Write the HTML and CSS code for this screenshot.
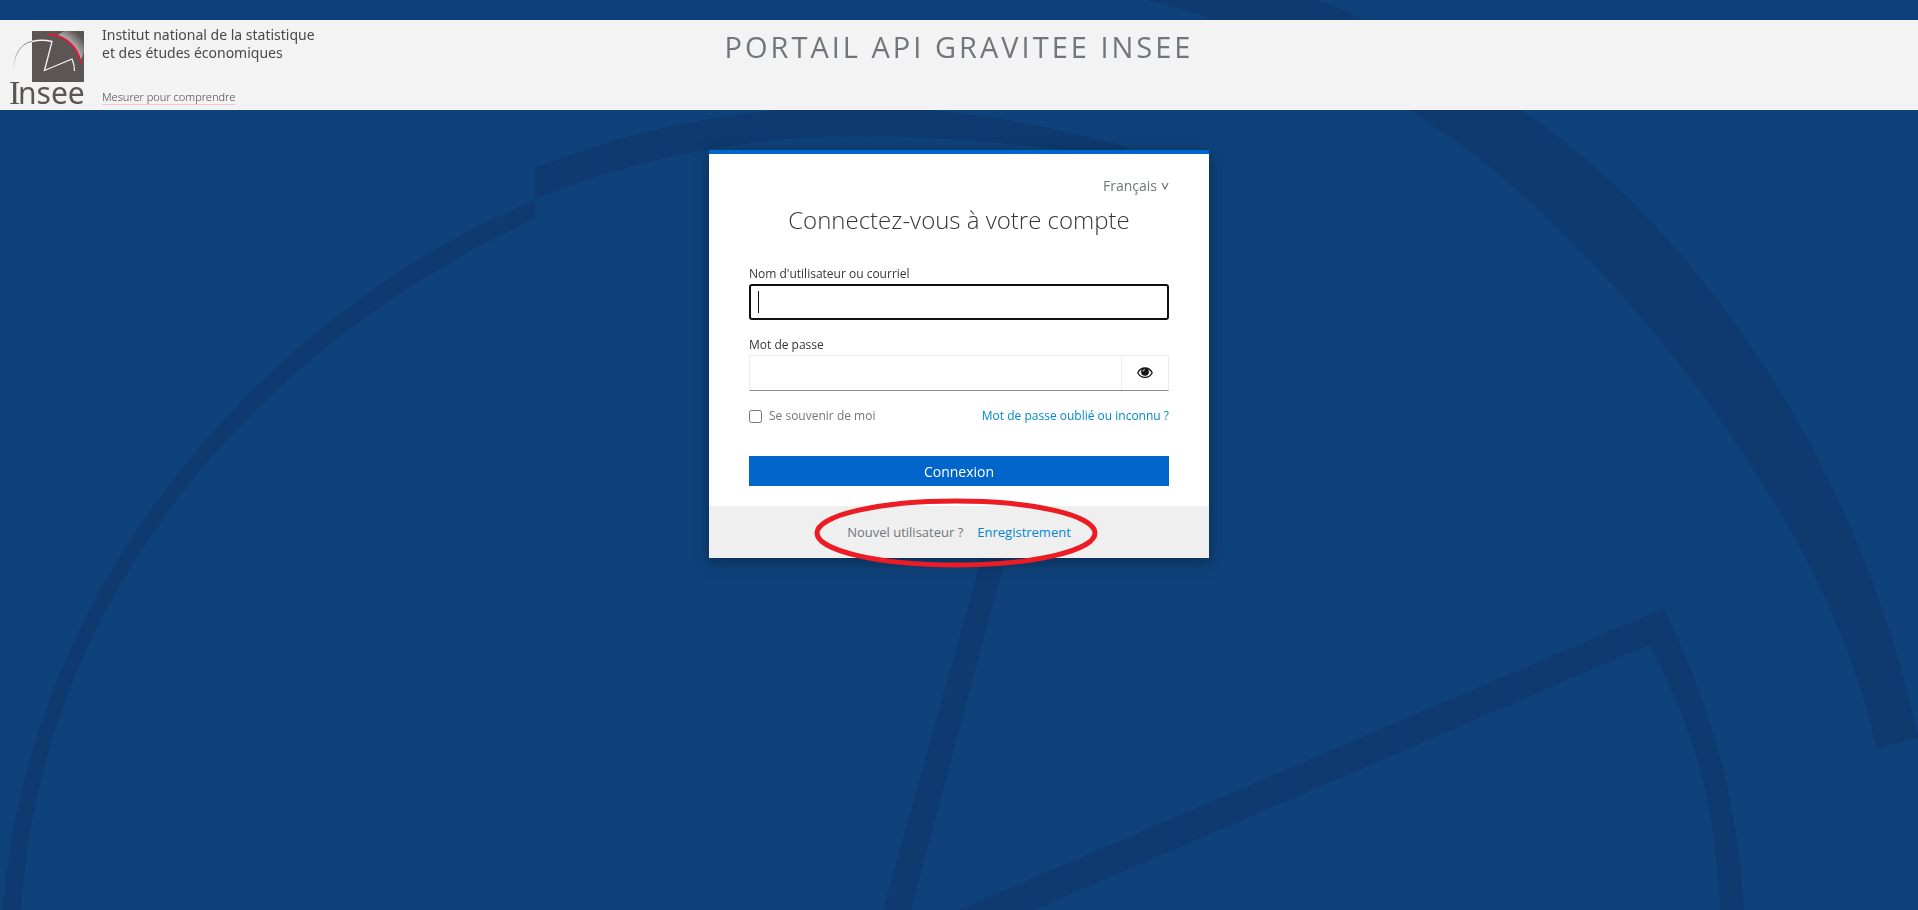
FILE: index.html
```html
<!DOCTYPE html>
<html lang="fr">
<head>
<meta charset="utf-8">
<title>Portail API Gravitee Insee</title>
<link rel="stylesheet" href="styles.css">
</head>
<body>
<svg class="backdrop" viewBox="0 0 1918 910" preserveAspectRatio="xMidYMin slice" aria-hidden="true">
  <path d="M3 910C28 572 280 305 535 200V168C640 125 750 107 850 107C950 107 1040 122 1130 148L1003 567L911 910H883L979 567L1080 152C1010 143 940 136 857 136C750 136 640 157 535 199V219C280 335 43 575 21 910Z"/>
  <path d="M1148 0C1240 25 1325 60 1408 110C1578 207 1830 510 1876 749L1918 738V736C1850 425 1665 205 1521 110C1458 66 1390 28 1319 0Z"/>
  <path d="M958 910L1664 608C1712 710 1738 800 1744 910H1720C1716 810 1696 730 1649 645L1034 910Z"/>
</svg>
<header class="site-header">
  <a class="brand" href="#">
    <svg class="brand-logo" viewBox="0 0 78 80" role="img" aria-label="Insee">
      <defs>
        <radialGradient id="glow" gradientUnits="userSpaceOnUse" cx="36.500" cy="40.500" r="52">
          <stop offset="0.72" stop-color="#b5b1b0"/>
          <stop offset="0.95" stop-color="#5b5553"/>
        </radialGradient>
        <linearGradient id="fade" x1="0" y1="1" x2="1" y2="0">
          <stop offset="0" stop-color="#f2f2f2"/>
          <stop offset="0.5" stop-color="#999"/>
          <stop offset="1" stop-color="#777"/>
        </linearGradient>
      </defs>
      <rect x="24" y="1" width="52" height="51" fill="#5b5553"/>
      <path d="M50 5Q67 11 73 30L76 22V1H56Z" fill="url(#glow)"/>
      <path d="M5 41C6 23 14 13 24 11.500" fill="none" stroke="url(#fade)"/>
      <path d="M24 11.500Q34 9 44 11.500L36.500 40.500L64 29Q66.500 34 66.500 41" fill="none" stroke="#f5f5f5" stroke-width="1.300"/>
      <path d="M40 4.500C56 5 69 15 73 33" fill="none" stroke="#e2183c" stroke-width="2"/>
      <text class="logo-text" x="1" y="74"><tspan class="logo-initial">I</tspan><tspan x="10">nsee</tspan></text>
    </svg>
    <span class="brand-copy">
      <span class="brand-name">Institut national de la statistique<br>et des études économiques</span>
      <span class="brand-motto">Mesurer pour comprendre</span>
    </span>
  </a>
  <div class="site-title">Portail API Gravitee Insee</div>
</header>
<main class="card">
  <div class="card-body">
    <button class="locale" type="button">Français <svg viewBox="0 0 8 8" aria-hidden="true"><path d="M1 1L4 7L7 1"/></svg></button>
    <h1 class="card-title">Connectez-vous à votre compte</h1>
    <form class="login">
      <div class="field">
        <label for="username">Nom d'utilisateur ou courriel</label>
        <div class="control control-focused"><input id="username" type="text"><span class="caret"></span></div>
      </div>
      <div class="field">
        <label for="password">Mot de passe</label>
        <div class="control control-password">
          <input id="password" type="password">
          <button class="reveal" type="button" aria-label="Afficher le mot de passe">
            <svg viewBox="0 0 16 12" aria-hidden="true">
              <path d="M8 1C4.800 1 2.200 3 .8 5.700C2.200 8.500 4.800 10.400 8 10.400S13.800 8.500 15.200 5.700C13.800 3 11.200 1 8 1Z" fill="none" stroke="#151515" stroke-width="1.300"/>
              <circle cx="8" cy="4.800" r="3.900" fill="#151515"/>
              <path d="M6 4.600Q6 2.600 8 2.600" fill="none" stroke="#fff" stroke-width=".8"/>
            </svg>
          </button>
        </div>
      </div>
      <div class="options">
        <label class="remember"><input type="checkbox"> Se souvenir de moi</label>
        <a href="#">Mot de passe oublié ou inconnu ?</a>
      </div>
      <button class="submit" type="submit">Connexion</button>
    </form>
  </div>
  <div class="card-footer">
    <span>Nouvel utilisateur ?</span>
    <a href="#">Enregistrement</a>
    <svg class="highlight" viewBox="0 0 284 70" aria-hidden="true"><ellipse cx="142" cy="35" rx="139" ry="32"/></svg>
  </div>
</main>
</body>
</html>
```
FILE: styles.css
```css
* { box-sizing: border-box; }
body {
  margin: 0;
  padding-top: 20px;
  min-height: 100vh;
  background: #0f427b;
  color: #363636;
  font-family: "Open Sans", "Noto Sans", sans-serif;
  font-size: 12px;
}
a { color: #0088ce; text-decoration: none; }
button, input { font-family: inherit; }
.backdrop { position: fixed; inset: 0; width: 100%; height: 100%; z-index: -1; fill: #0e3a70; }

.site-header {
  display: grid;
  grid-template-columns: 1fr auto 1fr;
  height: 90px;
  padding: 10px;
  background: #f3f3f3;
}
.brand { display: flex; gap: 16px; height: 80px; color: #4a4747; }
.brand-logo { flex: none; width: 78px; height: 80px; margin-left: -2px; overflow: visible; }
.logo-text { font-family: "Noto Sans", sans-serif; font-size: 30px; fill: #5b5553; }
.logo-initial { font-family: "Liberation Serif", serif; font-size: 34px; }
.brand-copy { display: flex; flex-direction: column; align-items: flex-start; justify-content: space-between; height: 75px; }
.brand-name { font-family: "Noto Sans", sans-serif; font-size: 14px; line-height: 18px; white-space: nowrap; margin-top: -4px; }
.brand-motto { font-family: "Noto Sans", sans-serif; font-size: 11px; font-weight: 300; line-height: 15px; border-bottom: 1px solid #f3c3cf; }
.site-title { margin-top: -1px; color: #72767b; font-size: 29px; line-height: 35px; letter-spacing: 3px; text-transform: uppercase; white-space: nowrap; }

.card {
  width: 500px;
  max-width: 100%;
  margin: 40px auto 0;
  background: #fff;
  border-top: 4px solid #06c;
  box-shadow: 0 4px 16px rgba(3, 3, 3, .35);
}
.card-body { display: flex; flex-direction: column; padding: 20px 40px; }
.locale { display: flex; align-items: center; gap: 4px; align-self: flex-end; padding: 0; border: 0; background: none; color: #72767b; font-size: 14px; line-height: 24px; }
.locale svg { width: 8px; height: 8px; fill: none; stroke: currentColor; stroke-width: 1.3; }
.card-title { margin: 4px 0 26px; text-align: center; font-size: 24px; font-weight: 300; line-height: 36px; }
.login { display: flex; flex-direction: column; }
.field { margin-bottom: 15px; }
.field label { display: block; line-height: 20px; }
.control { position: relative; display: flex; height: 36px; }
.control input { flex: 1; min-width: 0; padding: 0 8px; border: 0; outline: 0; background: none; font-size: 16px; }
.control-focused { border: 2px solid #101010; border-radius: 3px; }
.caret { position: absolute; left: 7px; top: 5px; width: 1px; height: 22px; background: #151515; }
.control-password { border: 1px solid #ededed; border-bottom-color: #8a8d90; }
.reveal { display: flex; align-items: center; justify-content: center; width: 47px; padding: 0; border: 0; border-left: 1px solid #ededed; background: none; }
.reveal svg { width: 16px; height: 12px; }
.options { display: flex; align-items: center; justify-content: space-between; line-height: 20px; }
.remember { display: flex; align-items: center; gap: 7px; color: #72767b; }
.remember input { width: 13px; height: 13px; margin: 0; }
.submit { height: 30px; margin-top: 30px; padding: 0; border: 0; background: #06c; color: #fff; font-size: 14px; font-weight: 500; }
.card-footer { position: relative; display: flex; justify-content: center; gap: 14px; padding: 15px; background: #efefef; color: #72767b; font-size: 13px; line-height: 22px; }
.highlight { position: absolute; left: 105px; top: -8px; width: 284px; height: 70px; fill: none; stroke: #ed1c24; stroke-width: 5; pointer-events: none; }
```
